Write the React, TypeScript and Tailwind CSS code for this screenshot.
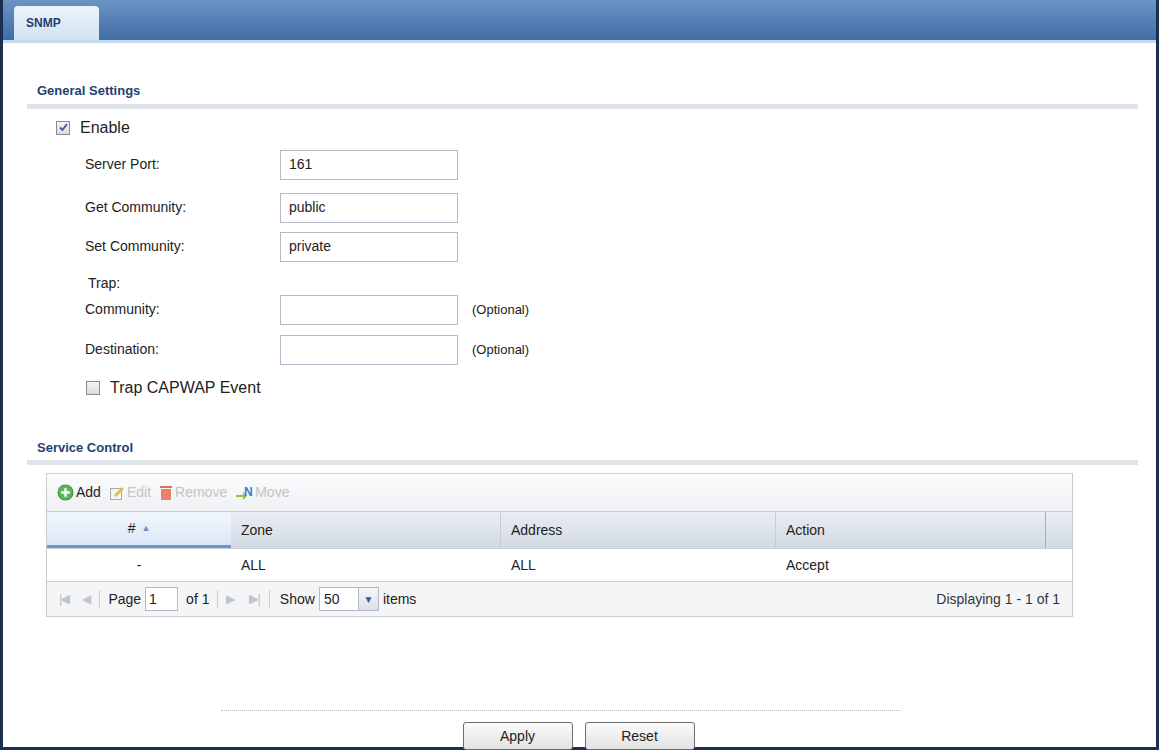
import React from 'react'

const label = 'text-[14px] text-[#222]'
const box = 'w-[178px] h-[30px] border border-[#b5b8c8] bg-white px-2 flex items-center text-[14px] text-[#222]'

const Row = ({ name, value, opt, top }: { name: string; value?: string; opt?: boolean; top: string }) => (
  <div className={`flex items-center ${top}`}>
    <div className={`${label} w-[195px] pl-[82px] box-content`}>{name}</div>
    <div className={box}>{value}</div>
    {opt && <span className="ml-[14px] text-[13px] text-[#222]">(Optional)</span>}
  </div>
)

const Check = ({ on }: { on?: boolean }) => (
  <div className="w-[14px] h-[14px] border border-[#8a8a8a] bg-gradient-to-b from-[#f4f4f4] to-[#dcdcdc] flex items-center justify-center">
    {on && (
      <svg width="11" height="11" viewBox="0 0 11 11">
        <path d="M2 5.5 L4.5 8 L9 2" stroke="#3a5a9c" strokeWidth="1.8" fill="none" />
      </svg>
    )}
  </div>
)

export default function App() {
  return (
    <div className="w-[1159px] h-[750px] bg-white border-x-[3px] border-b-[3px] border-[#1c2f50] flex flex-col" style={{ fontFamily: '"Liberation Sans", Arial, sans-serif' }}>
      <div className="h-[43px] bg-gradient-to-b from-[#6c94c4] to-[#3f6da6] flex items-end pl-[11px] border-b-[3px] border-[#c9d9ee]">
        <div className="w-[85px] h-[34px] bg-gradient-to-b from-[#eef4fb] to-[#d2e1f2] rounded-t-[4px] flex items-center pl-[12px] text-[12px] font-bold text-[#1f3f73]">SNMP</div>
      </div>
      <div className="flex-1 flex flex-col">
        <div className="mt-[38px] ml-[24px] mr-[18px]">
          <div className="text-[13px] font-bold text-[#1f3f73] pl-[10px]">General Settings</div>
          <div className="h-[5px] bg-[#dfe3ea] mt-[3px]" />
        </div>
        <div className="flex items-center gap-[10px] ml-[53px] mt-[7px]">
          <Check on />
          <span className="text-[16px] text-[#222]">Enable</span>
        </div>
        <Row name="Server Port:" value="161" top="mt-[10px]" />
        <Row name="Get Community:" value="public" top="mt-[13px]" />
        <Row name="Set Community:" value="private" top="mt-[9px]" />
        <div className={`${label} ml-[85px] mt-[11px]`}>Trap:</div>
        <Row name="Community:" opt top="mt-[1px]" />
        <Row name="Destination:" opt top="mt-[10px]" />
        <div className="flex items-center gap-[10px] ml-[83px] mt-[11px]">
          <Check />
          <span className="text-[16px] text-[#222]">Trap CAPWAP Event</span>
        </div>
        <div className="mt-[38px] ml-[24px] mr-[18px]">
          <div className="text-[13px] font-bold text-[#1f3f73] pl-[10px]">Service Control</div>
          <div className="h-[5px] bg-[#dfe3ea] mt-[3px]" />
        </div>
        <div className="ml-[43px] w-[1027px] mt-[8px] border border-[#c7ccd4] text-[14px] text-[#222]">
          <div className="h-[37px] bg-gradient-to-b from-[#fbfcfd] to-[#eef0f3] flex items-center gap-[8px] pl-[10px] text-[14px]">
            <span className="flex items-center gap-[2px]">
              <svg width="17" height="17" viewBox="0 0 16 16"><circle cx="8" cy="8" r="7" fill="#5cb85c" stroke="#3f8f3f" /><path d="M8 4v8M4 8h8" stroke="#fff" strokeWidth="2.2" /></svg>
              Add
            </span>
            <span className="flex items-center gap-[2px] text-[#c4c4c4]">
              <svg width="16" height="16" viewBox="0 0 16 16"><rect x="1.5" y="3.5" width="11" height="11" fill="#f5f5f5" stroke="#aaa" /><path d="M6 11 L14 3" stroke="#e8b840" strokeWidth="2.5" /></svg>
              Edit
            </span>
            <span className="flex items-center gap-[2px] text-[#c4c4c4]">
              <svg width="14" height="17" viewBox="0 0 14 17"><rect x="1" y="2" width="12" height="2" fill="#e07050" /><rect x="2" y="5" width="10" height="11" fill="#e8806a" /></svg>
              Remove
            </span>
            <span className="flex items-center text-[#c4c4c4]">
              <svg width="20" height="16" viewBox="0 0 20 16"><path d="M1 10h7v-3l4 4-4 4v-3H1z" fill="#8cc63f" /><text x="9" y="11" fontSize="12" fontWeight="bold" fill="#3a7bd5" fontFamily="Liberation Sans">N</text></svg>
              Move
            </span>
          </div>
          <div className="h-[38px] flex items-stretch bg-gradient-to-b from-[#e9edf3] to-[#d3dae4] border-y border-[#c7ccd4]">
            <div className="w-[184px] flex items-center justify-center gap-[6px] border-b-[3px] border-[#6c96d0] bg-gradient-to-b from-[#f1f6fc] to-[#dde8f5]">#<span className="text-[9px] text-[#6a8fc0]">▲</span></div>
            <div className="w-[270px] pl-[10px] flex items-center border-r border-[#c7ccd4]">Zone</div>
            <div className="w-[275px] pl-[10px] flex items-center border-r border-[#c7ccd4]">Address</div>
            <div className="w-[270px] pl-[10px] flex items-center border-r border-[#aab]">Action</div>
          </div>
          <div className="h-[32px] flex items-center bg-white">
            <div className="w-[184px] text-center">-</div>
            <div className="w-[270px] pl-[10px]">ALL</div>
            <div className="w-[275px] pl-[10px]">ALL</div>
            <div className="w-[270px] pl-[10px]">Accept</div>
          </div>
          <div className="h-[35px] border-t border-[#c7ccd4] bg-[#f4f5f7] flex items-center pl-[12px] pr-[12px] text-[14px]">
            <span className="text-[#c0c4cc] text-[13px] tracking-[-2px]">|◀</span>
            <span className="text-[#c0c4cc] text-[12px] ml-[14px]">◀</span>
            <span className="mx-[8px] h-[18px] border-l border-[#ccc]" />
            Page
            <span className="ml-[4px] w-[33px] h-[24px] border border-[#b5b8c8] bg-white px-[3px] flex items-center">1</span>
            <span className="ml-[8px]">of 1</span>
            <span className="mx-[8px] h-[18px] border-l border-[#ccc]" />
            <span className="text-[#c0c4cc] text-[12px]">▶</span>
            <span className="text-[#c0c4cc] text-[13px] ml-[14px] tracking-[-2px]">▶|</span>
            <span className="mx-[10px] h-[18px] border-l border-[#ccc]" />
            Show
            <span className="ml-[4px] w-[60px] h-[24px] border border-[#b5b8c8] bg-white flex items-center">
              <span className="flex-1 pl-[4px]">50</span>
              <span className="w-[20px] h-full bg-gradient-to-b from-[#f3f5f8] to-[#dde2ea] border-l border-[#b5b8c8] flex items-center justify-center text-[10px] text-[#3a5a9c]">▼</span>
            </span>
            <span className="ml-[4px]">items</span>
            <span className="ml-auto text-[#333]">Displaying 1 - 1 of 1</span>
          </div>
        </div>
        <div className="flex-1" />
        <div className="ml-[218px] w-[680px] border-t border-dotted border-[#bbb]" />
        <div className="flex justify-center gap-[12px] ml-[-2px] mt-[11px] mb-[-3px]">
          {['Apply', 'Reset'].map(b => (
            <div key={b} className="w-[110px] h-[28px] rounded-[3px] border border-[#6d6d6d] bg-gradient-to-b from-[#fbfbfb] to-[#e2e2e2] flex items-center justify-center text-[14px] text-[#222]">{b}</div>
          ))}
        </div>
      </div>
    </div>
  )
}
